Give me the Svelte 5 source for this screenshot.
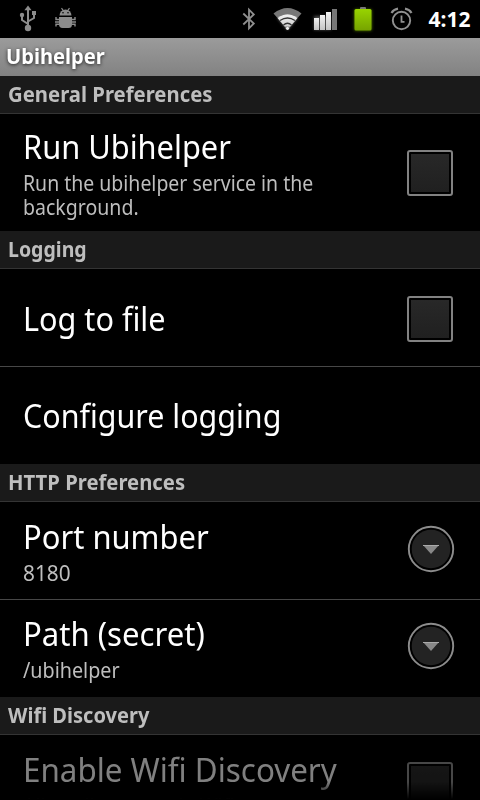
<script>
  const sections = [
    { title: 'General Preferences', scale: 0.967, items: [
      { title: 'Run Ubihelper', scale: 0.933, lines: [['Run the ubihelper service in the', 0.927], ['background.', 0.93]], widget: 'check' }
    ] },
    { title: 'Logging', scale: 0.93, items: [
      { title: 'Log to file', scale: 0.928, lines: [], widget: 'check' },
      { title: 'Configure logging', scale: 0.922, lines: [] }
    ] },
    { title: 'HTTP Preferences', scale: 0.965, items: [
      { title: 'Port number', scale: 0.937, lines: [['8180', 0.99]], widget: 'more' },
      { title: 'Path (secret)', scale: 0.942, lines: [['/ubihelper', 0.94]], widget: 'more' }
    ] },
    { title: 'Wifi Discovery', scale: 0.955, items: [
      { title: 'Enable Wifi Discovery', scale: 0.95, lines: [['Allow discovery via Wifi', 0.93]], widget: 'check', disabled: true }
    ] }
  ];
</script>

<div class="screen">
  <header class="status">
    <svg class="icons" width="420" height="38" viewBox="0 0 420 38">
      <defs>
        <linearGradient id="lit" x1="0" y1="0" x2="0" y2="1"><stop offset="0" stop-color="#f2f2f2" /><stop offset="1" stop-color="#c4c4c4" /></linearGradient>
        <linearGradient id="charge" x1="0" y1="0" x2="0" y2="1"><stop offset="0" stop-color="#98d400" /><stop offset="1" stop-color="#76a300" /></linearGradient>
        <filter id="glow" x="-30%" y="-30%" width="160%" height="160%"><feGaussianBlur stdDeviation="1.500" /></filter>
      </defs>
      <g fill="#8c8c8c">
        <path d="M28 5.500l3.600 4.800h-7.200z" />
        <path d="M28 9v19M28 24l-6-4v-5M28 21.500l6-3.500v-4" fill="none" stroke="#8c8c8c" stroke-width="2" />
        <circle cx="28" cy="28" r="3.200" />
        <circle cx="22" cy="15" r="2.200" />
        <rect x="32" y="11" width="4" height="4" />
      </g>
      <g fill="#8c8c8c">
        <path d="M59.500 15.500a6 6 0 0 1 12 0z" />
        <path d="M61.500 8.200l2.200 3M69.500 8.200l-2.200 3" stroke="#8c8c8c" stroke-width="1.200" />
        <path d="M59 17h13v7.500a3.500 3.500 0 0 1-3.500 3.500h-6a3.500 3.500 0 0 1-3.500-3.500z" />
        <path d="M59 19.500h-3v-2.500M59 22h-4M59 24.300h-3v2.200M72 19.500h3v-2.500M72 22h4M72 24.300h3v2.200" fill="none" stroke="#8c8c8c" stroke-width="1.400" />
        <circle cx="63" cy="12.800" r=".8" fill="#000" /><circle cx="68" cy="12.800" r=".8" fill="#000" />
      </g>
      <path d="M243.300 13.500l10.500 10-4.800 4.800v-18.600l4.800 4.800-10.500 10" fill="none" stroke="#8f8f8f" stroke-width="1.800" />
      <g>
        <path d="M277.500 18L287.500 30L297.500 18Q287.500 10 277.500 18z" fill="#fff" opacity=".4" filter="url(#glow)" />
        <path d="M273.500 13.500Q287.500 2.500 301.500 13.500L297.500 18Q287.500 10.500 277.500 18z" fill="#777" />
        <path d="M277.500 18Q287.500 10.500 297.500 18L287.500 30z" fill="url(#lit)" />
        <path d="M280 20.500Q287.500 15.500 295 20.500M283.500 25Q287.500 21.500 291.500 25" fill="none" stroke="#333" stroke-width="1.300" />
        <path d="M285 26.800h5L287.500 30z" fill="#333" />
        <circle cx="287.500" cy="28.300" r="1.600" fill="#eee" />
      </g>
      <rect x="314" y="16" width="17" height="14" fill="#fff" opacity=".3" filter="url(#glow)" />
      <rect x="314" y="18" width="5" height="12" fill="url(#lit)" />
      <rect x="320" y="15" width="5" height="15" fill="url(#lit)" />
      <rect x="326" y="12" width="5" height="18" fill="url(#lit)" />
      <rect x="332" y="9" width="5" height="21" fill="#777" />
      <rect x="354" y="9" width="18" height="22" rx="2" fill="#7fb800" filter="url(#glow)" opacity=".5" />
      <path d="M360 9v-1q0-1 1-1h4q1 0 1 1v1z" fill="#777" />
      <rect x="354.500" y="9" width="17" height="21.500" rx="1.500" fill="url(#charge)" />
      <g fill="none" stroke="#909090">
        <circle cx="401.500" cy="20.500" r="8.700" stroke-width="1.900" />
        <path d="M401.500 15.500v6.300h3" stroke-width="1.800" />
        <path d="M391.500 13q2-3.500 6.500-4.300M411.500 13q-2-3.500-6.500-4.300" stroke-width="2.200" />
      </g>
    </svg>
    <span class="clock">4:12</span>
  </header>
  <h1><span>Ubihelper</span></h1>

  <main>
    {#each sections as section}
      <h2><span style:transform="scaleX({section.scale})">{section.title}</span></h2>
      <ul>
        {#each section.items as item}
          <li class:tall={item.lines.length > 1} class:disabled={item.disabled}>
            <div class="text">
              <div class="name" style:transform="scaleX({item.scale})">{item.title}</div>
              {#if item.lines.length}
                <div class="summary">
                  {#each item.lines as [line, scale]}<div style:transform="scaleX({scale})">{line}</div>{/each}
                </div>
              {/if}
            </div>
            {#if item.widget === 'check'}
              <span class="check"><i></i></span>
            {:else if item.widget === 'more'}
              <svg class="more" width="48" height="48" viewBox="0 0 48 48">
                <circle cx="24" cy="24" r="22.200" fill="#000" stroke="#8c8c8c" stroke-width="1.900" />
                <circle cx="24" cy="24" r="19.300" fill="#232323" />
                <path d="M16 20h16l-8 9z" fill="#888" /><path d="M16 20.500h16" stroke="#aaa" />
              </svg>
            {/if}
          </li>
        {/each}
      </ul>
    {/each}
  </main>
  <div class="fade"></div>
</div>

<style>
  :global(body) { background: #000; }
  .screen {
    position: relative; width: 480px; height: 800px; overflow: hidden;
    display: flex; flex-direction: column;
    background: #000; color: #fff;
    font-family: "Noto Sans", "Open Sans", sans-serif;
  }
  .status { flex: none; height: 38px; display: flex; align-items: center; }
  .icons { display: block; flex: none; }
  .clock { margin-left: 8.500px; font-size: 21px; line-height: 38px; font-weight: 700; white-space: nowrap; }
  h1, h2, ul { margin: 0; padding: 0; }
  h1 {
    flex: none; height: 38px; padding-left: 6px; box-sizing: border-box;
    background: linear-gradient(#9b9b9b, #828282);
    font-size: 21px; line-height: 37px; font-weight: 700;
    text-shadow: 0 1px 4px #222;
  }
  h1 span, h2 span { display: inline-block; transform-origin: 0 50%; white-space: nowrap; }
  h1 span { transform: scaleX(.958); }
  main { flex: 1; min-height: 0; overflow: hidden; }
  h2 {
    height: 38px; box-sizing: border-box; padding-left: 8px;
    background: #1a1a1a; border-bottom: 1px solid #343434;
    color: #bebebe; font-size: 21px; line-height: 37px; font-weight: 700;
  }
  ul { list-style: none; }
  li { height: 97px; display: flex; align-items: center; box-sizing: border-box; padding: 2px 26px 0 23px; }
  li + li { height: 98px; border-top: 1px solid #474747; padding-top: 0; }
  .tall { height: 117px; padding-top: 0; }
  .text { flex: 1; min-width: 0; }
  .name { font-size: 33px; line-height: 39px; white-space: nowrap; transform-origin: 0 50%; }
  .summary { margin-top: 5px; padding-bottom: 2px; font-size: 21px; line-height: 24px; color: #bebebe; white-space: nowrap; }
  .summary div { transform-origin: 0 50%; }
  .tall .summary { padding-bottom: 0; }
  .check {
    flex: none; width: 46px; height: 46px; margin-right: 1px; padding: 2px; box-sizing: border-box;
    border: 2px solid #828282; border-radius: 3px;
  }
  .check i { display: block; height: 38px; background: linear-gradient(#282828, #202020); }
  .more { flex: none; margin: 0 -1px 5px 0; }
  .disabled .name { color: #808080; }
  .disabled .summary { color: #404040; }
  .disabled .check { opacity: .55; }
  .fade { position: absolute; left: 0; right: 0; bottom: 0; height: 18px; background: linear-gradient(transparent, #000 95%); }
</style>
